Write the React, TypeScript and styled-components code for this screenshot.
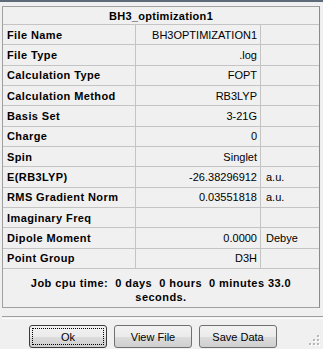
import styled, { createGlobalStyle } from "styled-components";

const GlobalStyle = createGlobalStyle`
  html, body {
    margin: 0;
    padding: 0;
    background: #f0f0f0;
  }
  body {
    font-family: "Liberation Sans", Arial, sans-serif;
    font-size: 11px;
    color: #000;
  }
`;

type Row = { label: string; value?: string; unit?: string };

const rows: Row[] = [
  { label: "File Name", value: "BH3OPTIMIZATION1" },
  { label: "File Type", value: ".log" },
  { label: "Calculation Type", value: "FOPT" },
  { label: "Calculation Method", value: "RB3LYP" },
  { label: "Basis Set", value: "3-21G" },
  { label: "Charge", value: "0" },
  { label: "Spin", value: "Singlet" },
  { label: "E(RB3LYP)", value: "-26.38296912", unit: "a.u." },
  { label: "RMS Gradient Norm", value: "0.03551818", unit: "a.u." },
  { label: "Imaginary Freq" },
  { label: "Dipole Moment", value: "0.0000", unit: "Debye" },
  { label: "Point Group", value: "D3H" },
];

const ResizeGrip = () => (
  <Grip width="12" height="12" viewBox="0 0 12 12">
    {[
      [9, 1],
      [9, 5],
      [5, 5],
      [9, 9],
      [5, 9],
      [1, 9],
    ].map(([x, y]) => (
      <g key={`${x}-${y}`}>
        <rect x={x + 1} y={y + 1} width="2" height="2" fill="#ffffff" />
        <rect x={x} y={y} width="2" height="2" fill="#b8b8b8" />
      </g>
    ))}
  </Grip>
);

export default function App() {
  return (
    <>
      <GlobalStyle />
      <Window>
        <Panel>
          <Title>BH3_optimization1</Title>
          <Table>
            {rows.map((r) => (
              <TableRow key={r.label}>
                <Label>{r.label}</Label>
                <Value>{r.value ?? ""}</Value>
                <Unit>{r.unit ?? ""}</Unit>
              </TableRow>
            ))}
          </Table>
          <Footer>
            {"Job cpu time:  0 days  0 hours  0 minutes 33.0 seconds."}
          </Footer>
        </Panel>
        <Separator />
        <ButtonBar>
          <Button $focused>Ok</Button>
          <Button>View File</Button>
          <Button>Save Data</Button>
        </ButtonBar>
        <ResizeGrip />
      </Window>
    </>
  );
}

const Window = styled.div`
  position: relative;
  width: 323px;
  height: 349px;
  box-sizing: border-box;
  border-top: 2px solid #5f6a79;
  background: #f0f0f0;
  overflow: hidden;
`;

const Panel = styled.div`
  margin: 4px 0 0 2px;
  width: 318px;
  height: 302px;
  box-sizing: border-box;
  border: 1px solid #a0a0a0;
  border-right-color: #8a8a8a;
  display: flex;
  flex-direction: column;
`;

const Title = styled.div`
  height: 18px;
  box-sizing: border-box;
  border-bottom: 1px solid #c4c4c4;
  display: flex;
  align-items: center;
  justify-content: center;
  font-weight: bold;
  font-size: 11px;
  letter-spacing: 0.3px;
  padding-top: 1px;
`;

const Table = styled.div`
  display: grid;
  grid-auto-rows: 20.33px;
`;

const TableRow = styled.div`
  display: grid;
  grid-template-columns: 133px 125px 1fr;
  border-bottom: 1px solid #c4c4c4;
`;

const Cell = styled.div`
  display: flex;
  align-items: center;
  white-space: nowrap;
  overflow: hidden;
`;

const Label = styled(Cell)`
  padding-left: 4px;
  font-weight: bold;
  letter-spacing: 0.4px;
  border-right: 1px solid #c4c4c4;
`;

const Value = styled(Cell)`
  justify-content: flex-end;
  padding-right: 3px;
  border-right: 1px solid #c4c4c4;
`;

const Unit = styled(Cell)`
  padding-left: 5px;
`;

const Footer = styled.div`
  flex: 1;
  padding: 7px 10px 0;
  text-align: center;
  white-space: pre-wrap;
  font-weight: bold;
  font-size: 11px;
  letter-spacing: 0.45px;
  line-height: 14px;
`;

const Separator = styled.div`
  margin: 8px 0 0 2px;
  height: 1px;
  border-top: 1px solid #a0a0a0;
  border-bottom: 1px solid #ffffff;
`;

const ButtonBar = styled.div`
  display: flex;
  gap: 7px;
  padding: 6px 0 0 29px;
`;

const Button = styled.button<{ $focused?: boolean }>`
  width: 78px;
  height: 23px;
  box-sizing: border-box;
  font-family: "Liberation Sans", Arial, sans-serif;
  font-size: 11px;
  color: #000;
  border: 1px solid ${(p) => (p.$focused ? "#3c3c3c" : "#707070")};
  border-radius: 3px;
  background: linear-gradient(#f2f2f2 0%, #ebebeb 50%, #dddddd 51%, #cfcfcf 100%);
  padding: 0;
  outline: ${(p) => (p.$focused ? "1px dotted #000" : "none")};
  outline-offset: -4px;
`;

const Grip = styled.svg`
  position: absolute;
  right: 3px;
  bottom: 3px;
`;
